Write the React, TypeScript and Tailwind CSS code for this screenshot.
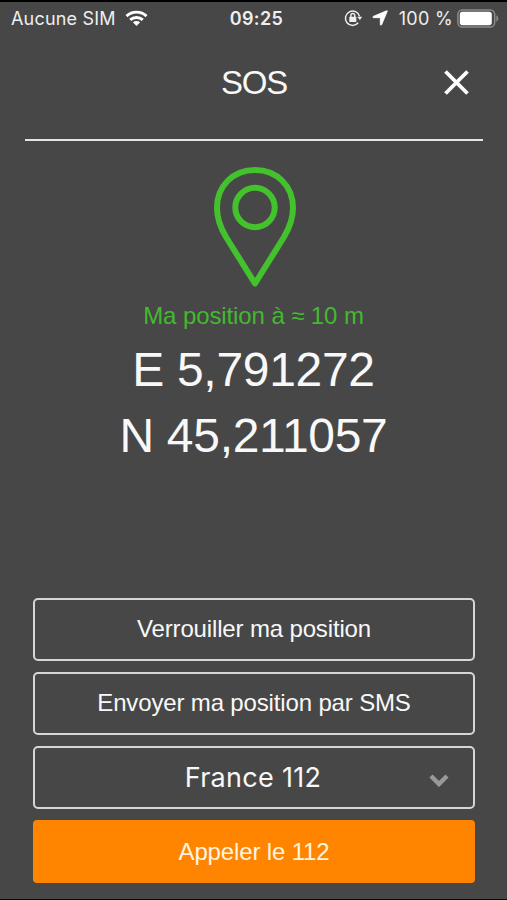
import type { ReactNode } from "react";

interface OutlineButtonProps {
  children: ReactNode;
  className?: string;
}

function WifiIcon() {
  return (
    <svg className="h-[17px] w-[23px]" viewBox="0 0 23 17" fill="none" stroke="#fff" strokeWidth="2.9">
      <path d="M1.5 6.1C7 .8 16 .8 21.500 6.100" />
      <path d="M5.200 9.900C8.700 6.600 14.300 6.600 17.800 9.900" />
      <path d="M7.900 12.300C9.900 10.600 13.100 10.600 15.100 12.300L11.500 16Z" fill="#fff" stroke="none" />
    </svg>
  );
}

function RotationLockIcon() {
  return (
    <svg className="h-[18px] w-[18px]" viewBox="0 0 18 18" fill="none" stroke="#eee" strokeWidth="1.5">
      <path d="M15.600 7.400A7.200 7.200 0 1 0 14.200 13.800" />
      <path d="M13.200 7.700H18.200L15.900 11Z" fill="#eee" stroke="none" />
      <rect x="5.300" y="7.700" width="7" height="5.300" rx=".6" fill="#eee" stroke="none" />
      <path d="M6.900 8V6.400a1.900 1.900 0 0 1 3.800 0V8" strokeWidth="1.400" />
    </svg>
  );
}

function LocationArrowIcon() {
  return (
    <svg className="h-[16px] w-[16px]" viewBox="0 0 16 16" fill="#fff" stroke="#fff" strokeWidth=".8">
      <path d="M14.500.8Q15.600.4 15.200 1.500L9.600 14.800Q8.800 15.700 8.300 14.800V8.500Q8.300 7.700 7.500 7.700H1.200Q.3 7.200 1.200 6.400Z" />
    </svg>
  );
}

function BatteryIcon() {
  return (
    <svg className="h-[19px] w-[42px]" viewBox="0 0 42 19" fill="none">
      <rect x=".9" y=".9" width="36.800" height="17.200" rx="4.600" stroke="#8a8a8a" strokeWidth="1.500" />
      <rect x="2.800" y="2.800" width="32" height="13.400" rx="2.600" fill="#fff" />
      <path d="M39.300 6.200q2 1 2 3.300t-2 3.300z" fill="#8a8a8a" />
    </svg>
  );
}

function StatusBar() {
  return (
    <div className="grid h-[32px] grid-cols-[1fr_auto_1fr] items-center pl-[11px] pr-[8px] font-['Inter','Liberation_Sans',sans-serif] text-[18px] text-[#eee]">
      <div className="flex items-center gap-[9px]">
        <span className="whitespace-nowrap tracking-[0.2px]">Aucune SIM</span>
        <WifiIcon />
      </div>
      <span className="ml-[3px] text-[18px] font-semibold tracking-[0.4px]">09:25</span>
      <div className="flex items-center justify-end">
        <RotationLockIcon />
        <span className="ml-[10px] flex">
          <LocationArrowIcon />
        </span>
        <span className="ml-[11px] mr-[4px] whitespace-nowrap tracking-[0.3px]">100 %</span>
        <BatteryIcon />
      </div>
    </div>
  );
}

function OutlineButton({ children, className = "" }: OutlineButtonProps) {
  return (
    <button
      type="button"
      className={`flex h-[63px] w-full items-center justify-center rounded-[5px] border-2 border-[#d6d6d6] pb-px text-[24px] tracking-[-0.15px] ${className}`}
    >
      {children}
    </button>
  );
}

export default function App() {
  return (
    <div className="flex h-[900px] w-[507px] flex-col border-b border-t-2 border-black bg-[#474747] font-['Liberation_Sans',Arial,sans-serif] text-[#f8f8f8]">
      <StatusBar />

      <header className="ml-[25px] mr-[24px] grid h-[107px] grid-cols-[1fr_auto_1fr] items-start border-b-2 border-[#e4e4e4] pt-[29px]">
        <h1 className="col-start-2 mt-px text-[33px] leading-[38px] tracking-[-1.3px]">SOS</h1>
        <button type="button" aria-label="Fermer" className="mr-[13px] mt-[6px] justify-self-end">
          <svg className="h-[27px] w-[27px]" viewBox="0 0 27 27" stroke="#fff" strokeWidth="3.800">
            <path d="M2.500 2.500 24.500 24.500M24.500 2.500 2.500 24.500" />
          </svg>
        </button>
      </header>

      <main className="flex flex-1 flex-col items-center pt-[25px]">
        <svg className="ml-[2px] h-[122px] w-[84px]" viewBox="0 0 84 122" fill="none" stroke="#43c22d" strokeWidth="6">
          <path d="M42 117.500L13 71C8 62.500 4 52 4 42C4 20 20 4 42 4S80 20 80 42C80 52 76 62.500 71 71Z" strokeLinejoin="round" />
          <circle cx="42" cy="41.500" r="19.700" />
        </svg>
        <p className="mt-[14px] whitespace-nowrap text-[24px] leading-[28px] tracking-[-0.1px] text-[#43b92f]">
          Ma position à ≈ 10 m
        </p>
        <div className="mt-[7px] whitespace-nowrap text-center text-[48px] leading-[66px] tracking-[-0.3px]">
          <p>E 5,791272</p>
          <p>N 45,211057</p>
        </div>
      </main>

      <footer className="flex flex-col gap-[11px] pb-[16px] pl-[33px] pr-[32px]">
        <OutlineButton>Verrouiller ma position</OutlineButton>
        <OutlineButton>Envoyer ma position par SMS</OutlineButton>
        <button
          type="button"
          className="grid h-[63px] w-full grid-cols-[1fr_auto_1fr] items-center rounded-[5px] border-2 border-[#d6d6d6] pr-[24px] font-['Inter','Liberation_Sans',sans-serif] text-[27px] tracking-[0.3px]"
        >
          <span className="col-start-2 ml-[22px] mt-[2px]">France 112</span>
          <svg className="mt-[6px] h-[13px] w-[20px] justify-self-end" viewBox="0 0 20 13" fill="none" stroke="#999" strokeWidth="4.500">
            <path d="M2 2 10 10 18 2" />
          </svg>
        </button>
        <button type="button" className="h-[63px] w-full rounded-[4px] bg-[#ff8500] text-[24px] tracking-[-0.15px] text-[#fff4e0]">
          Appeler le 112
        </button>
      </footer>
    </div>
  );
}
